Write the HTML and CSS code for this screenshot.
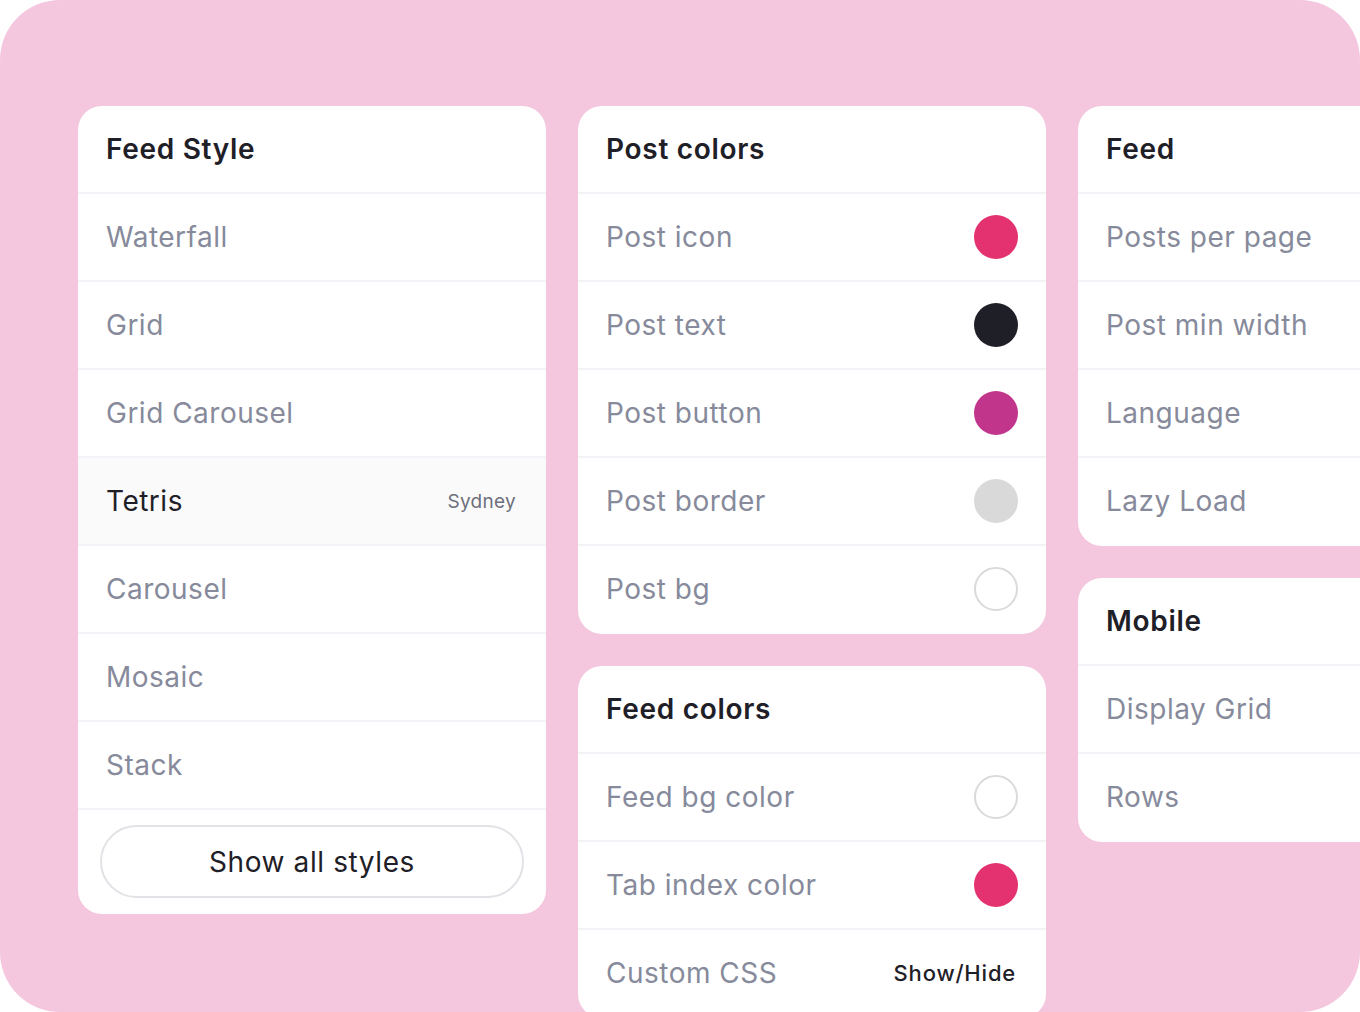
FILE: index.html
```html
<!DOCTYPE html>
<html>
<head>
<meta charset="utf-8">
<link rel="stylesheet" href="styles.css">
</head>
<body>
<div class="canvas">
  <div class="column">
    <section class="card">
      <div class="row head">Feed Style</div>
      <div class="row">Waterfall</div>
      <div class="row">Grid</div>
      <div class="row">Grid Carousel</div>
      <div class="row active"><span>Tetris</span><span class="tag">Sydney</span></div>
      <div class="row">Carousel</div>
      <div class="row">Mosaic</div>
      <div class="row">Stack</div>
      <div class="foot"><button class="btn">Show all styles</button></div>
    </section>
  </div>
  <div class="column">
    <section class="card">
      <div class="row head">Post colors</div>
      <div class="row"><span>Post icon</span><span class="dot pink"></span></div>
      <div class="row"><span>Post text</span><span class="dot black"></span></div>
      <div class="row"><span>Post button</span><span class="dot magenta"></span></div>
      <div class="row"><span>Post border</span><span class="dot grey"></span></div>
      <div class="row last"><span>Post bg</span><span class="dot empty"></span></div>
    </section>
    <section class="card">
      <div class="row head">Feed colors</div>
      <div class="row"><span>Feed bg color</span><span class="dot empty"></span></div>
      <div class="row"><span>Tab index color</span><span class="dot pink"></span></div>
      <div class="row"><span>Custom CSS</span><span class="link">Show/Hide</span></div>
    </section>
  </div>
  <div class="column">
    <section class="card">
      <div class="row head">Feed</div>
      <div class="row">Posts per page</div>
      <div class="row">Post min width</div>
      <div class="row">Language</div>
      <div class="row last">Lazy Load</div>
    </section>
    <section class="card">
      <div class="row head">Mobile</div>
      <div class="row">Display Grid</div>
      <div class="row last">Rows</div>
    </section>
  </div>
</div>
</body>
</html>
```
FILE: styles.css
```css
* { box-sizing: border-box; }
html, body { margin: 0; padding: 0; background: #ffffff; }
body { font-family: Inter, "Noto Sans", sans-serif; }
.canvas {
  width: 1360px;
  height: 1012px;
  background: #f4c7df;
  border-radius: 60px;
  overflow: hidden;
  display: flex;
  align-items: flex-start;
  gap: 32px;
  padding: 106px 0 0 78px;
}
.column {
  width: 468px;
  flex-shrink: 0;
  display: flex;
  flex-direction: column;
  gap: 32px;
}
.card {
  flex-shrink: 0;
  background: #ffffff;
  border-radius: 24px;
  overflow: hidden;
}
.row {
  height: 88px;
  flex-shrink: 0;
  display: flex;
  align-items: center;
  justify-content: space-between;
  padding: 0 28px 0 28px;
  border-bottom: 2px solid #f4f4f8;
  font-size: 28px;
  line-height: 1;
  color: #868a9b;
  letter-spacing: 0.5px;
}
.row.last { border-bottom-color: transparent; }
.row.head {
  color: #1f2027;
  font-weight: 600;
  font-size: 28px;
  letter-spacing: 0.7px;
}
.row.active { background: #fafafa; color: #1f2027; }
.tag { font-size: 19px; color: #6d707c; padding-right: 2px; letter-spacing: 0.3px; }
.dot {
  width: 44px;
  height: 44px;
  border-radius: 50%;
  flex-shrink: 0;
}
.dot.pink { background: #e3326f; }
.dot.black { background: #1f2027; }
.dot.magenta { background: #c1358a; }
.dot.grey { background: #d9d9d9; }
.dot.empty { border: 2px solid #dadada; background: #fff; }
.link { font-size: 22px; color: #1f2027; font-weight: 500; padding-right: 2px; letter-spacing: 0.8px; }
.foot { padding: 15px 22px 16px 22px; }
.btn {
  display: block;
  width: 100%;
  height: 73px;
  border: 2px solid #e2e2e7;
  border-radius: 37px;
  background: #fff;
  font-family: Inter, "Noto Sans", sans-serif;
  font-size: 28px;
  letter-spacing: 0.6px;
  color: #1f2027;
}
```
